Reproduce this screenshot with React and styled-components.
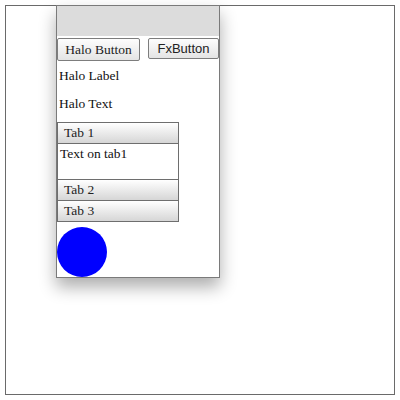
import React from "react";
import styled, { createGlobalStyle } from "styled-components";

const Global = createGlobalStyle`
  html, body { margin: 0; padding: 0; background: #fff; }
  body { font-family: "Liberation Serif", serif; }
`;

const Frame = styled.div`
  box-sizing: border-box;
  margin: 5px;
  width: 390px;
  height: 390px;
  border: 1px solid #6a6a6a;
  display: flex;
  flex-direction: column;
  align-items: flex-start;
`;

const Panel = styled.div`
  box-sizing: border-box;
  margin: -1px 0 0 50px;
  width: 164px;
  height: 273px;
  border: 1px solid #7a7a7a;
  background: #fff;
  box-shadow: 0 9px 16px rgba(0, 0, 0, 0.32);
  display: flex;
  flex-direction: column;
  font-family: "Liberation Serif", serif;
  font-size: 13.5px;
  color: #111;
`;

const Header = styled.div`
  height: 30px;
  background: #dcdcdc;
  flex: none;
`;

const ButtonRow = styled.div`
  display: flex;
  justify-content: space-between;
  align-items: flex-start;
  margin-top: 2px;
  flex: none;
`;

const Button = styled.button`
  box-sizing: border-box;
  margin: 0;
  padding: 0;
  width: ${(p) => p.$w}px;
  height: ${(p) => p.$h}px;
  border: 1px solid #7d7d7d;
  border-radius: 2px;
  background: linear-gradient(#fdfdfd, #e4e4e4);
  color: #222;
  font-family: ${(p) => (p.$sans ? '"Liberation Sans", Arial, sans-serif' : '"Liberation Serif", serif')};
  font-size: ${(p) => (p.$sans ? "13px" : "13.5px")};
  line-height: 1;
  display: flex;
  align-items: center;
  justify-content: center;
`;

const TextLine = styled.div`
  height: 16px;
  line-height: 16px;
  padding-left: 2px;
  margin-top: ${(p) => p.$mt}px;
  flex: none;
`;

const Tabs = styled.div`
  box-sizing: border-box;
  margin-top: 10px;
  width: 122px;
  border: 1px solid #6e6e6e;
  flex: none;
  display: flex;
  flex-direction: column;
`;

const TabHead = styled.div`
  box-sizing: border-box;
  height: ${(p) => (p.$first ? 20 : 21)}px;
  line-height: 20px;
  padding-left: 6px;
  background: linear-gradient(#ffffff, #d6d6d6);
  border-top: ${(p) => (p.$first ? "none" : "1px solid #6e6e6e")};
  color: #222;
`;

const TabBody = styled.div`
  box-sizing: border-box;
  height: 36px;
  border-top: 1px solid #6e6e6e;
  padding: 2px 0 0 2px;
  line-height: 16px;
`;

const Circle = styled.div`
  margin-top: 5px;
  width: 50px;
  height: 50px;
  border-radius: 50%;
  background: #0000ff;
  flex: none;
  position: relative;
`;

export default function App() {
  return (
    <>
      <Global />
      <Frame>
        <Panel>
          <Header />
          <ButtonRow>
            <Button $w={83} $h={23}>Halo Button</Button>
            <Button $w={71} $h={21} $sans>FxButton</Button>
          </ButtonRow>
          <TextLine $mt={7}>Halo Label</TextLine>
          <TextLine $mt={12}>Halo Text</TextLine>
          <Tabs>
            <TabHead $first>Tab 1</TabHead>
            <TabBody>Text on tab1</TabBody>
            <TabHead>Tab 2</TabHead>
            <TabHead>Tab 3</TabHead>
          </Tabs>
          <Circle />
        </Panel>
      </Frame>
    </>
  );
}
